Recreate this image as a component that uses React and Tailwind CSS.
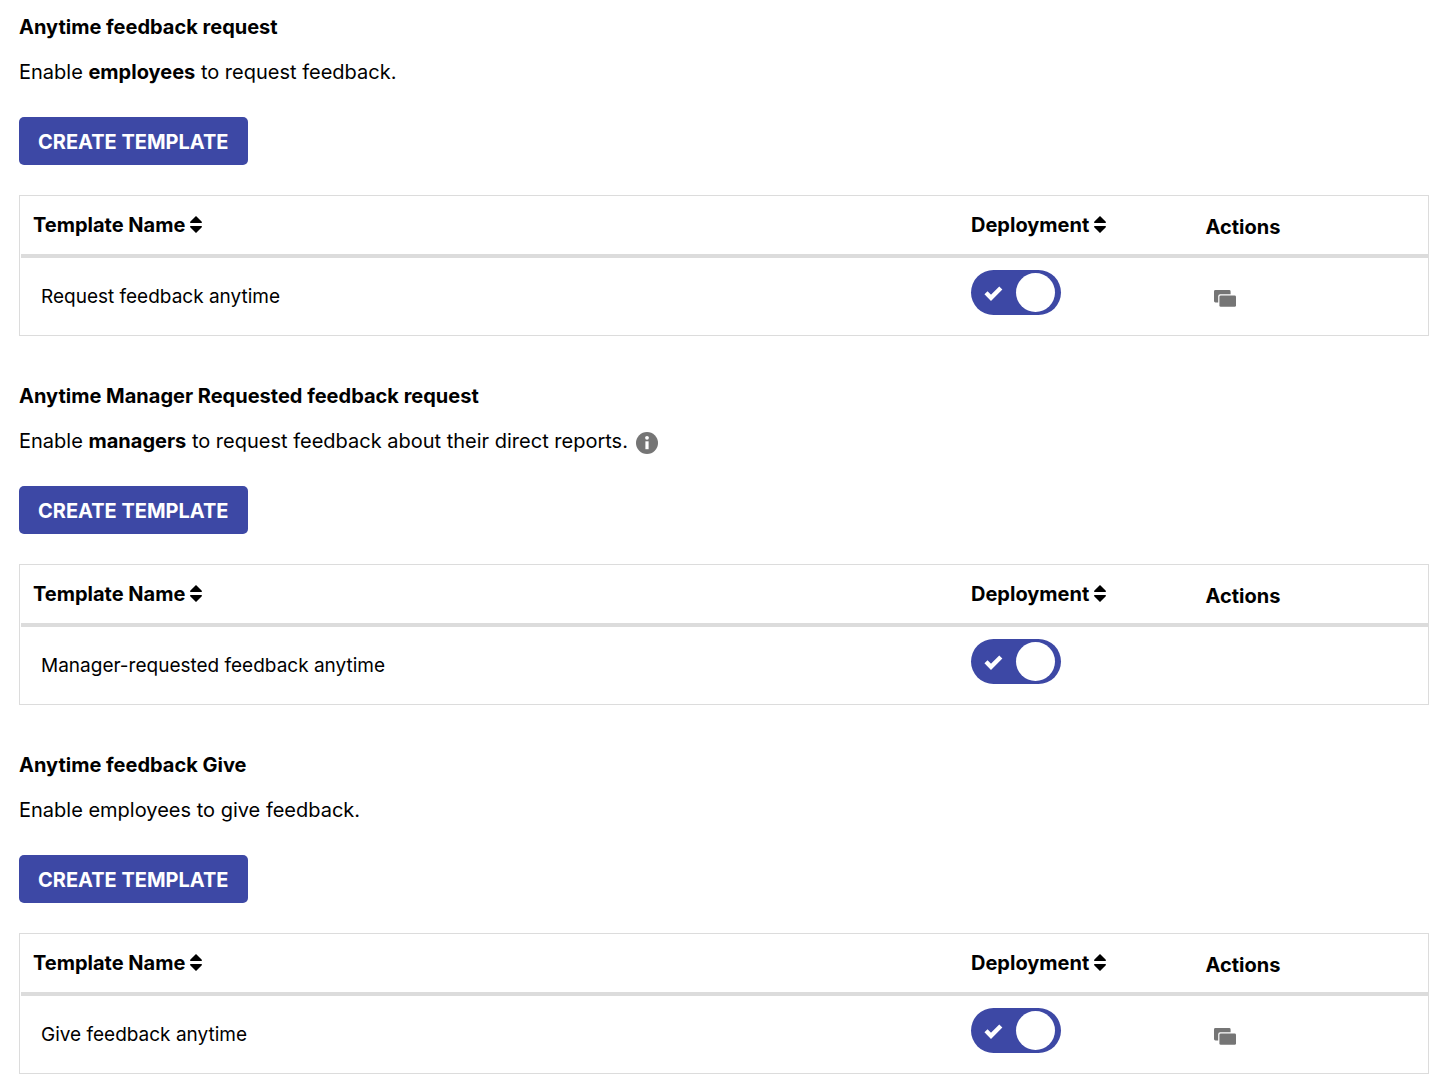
import { useState } from "react";

const sections = [
  {
    title: "Anytime feedback request",
    text: (
      <>
        Enable <b>employees</b> to request feedback.
      </>
    ),
    template: "Request feedback anytime",
    copy: true,
  },
  {
    title: "Anytime Manager Requested feedback request",
    text: (
      <>
        Enable <b>managers</b> to request feedback about their direct reports.
      </>
    ),
    info: true,
    template: "Manager-requested feedback anytime",
  },
  {
    title: "Anytime feedback Give",
    text: <>Enable employees to give feedback.</>,
    template: "Give feedback anytime",
    copy: true,
  },
];

function SortIcon() {
  return (
    <svg width="14" height="18" viewBox="0 0 14 18" aria-hidden="true">
      <path
        d="M7 0 12.8 5.8Q13.4 7.1 12.2 7.1H1.8Q.6 7.1 1.2 5.8ZM7 17 12.8 11.2Q13.4 9.9 12.2 9.9H1.8Q.6 9.9 1.2 11.2Z"
        fill="currentColor"
      />
    </svg>
  );
}

function InfoIcon() {
  return (
    <svg width="22" height="22" viewBox="0 0 22 22" aria-hidden="true">
      <circle cx="11" cy="11" r="11" fill="#757575" />
      <circle cx="11" cy="5.8" r="1.9" fill="#fff" />
      <path d="M9.4 9.3h3.2v7.9H9.4Z" fill="#fff" />
    </svg>
  );
}

function CopyIcon() {
  return (
    <svg width="22" height="17" viewBox="0 0 22 17" aria-hidden="true">
      <path
        d="M1.4 0H15.2Q16.6 0 16.6 1.4V4.2H6.2Q4.2 4.2 4.2 6.2V12.4H1.4Q0 12.4 0 11V1.4Q0 0 1.4 0Z"
        fill="#757575"
      />
      <rect x="5.4" y="5.4" width="16.6" height="11.4" rx="1.4" fill="#757575" />
    </svg>
  );
}

function Toggle({ label }) {
  const [on, setOn] = useState(true);
  return (
    <label className="relative block h-[45px] w-[90px] cursor-pointer">
      <input
        type="checkbox"
        role="switch"
        aria-label={label}
        checked={on}
        onChange={() => setOn(!on)}
        className="peer block h-full w-full cursor-pointer appearance-none rounded-full bg-gray-400 checked:bg-[#3d48a5]"
      />
      <svg
        className="absolute top-4 left-[13px] hidden peer-checked:block"
        width="19"
        height="16"
        viewBox="0 0 19 16"
        aria-hidden="true"
      >
        <path d="M2 6.8 7 11.8 16.8 2" fill="none" stroke="#fff" strokeWidth="4.4" />
      </svg>
      <span className="absolute top-[3px] left-[3px] size-[39px] rounded-full bg-white peer-checked:left-[45px]" />
    </label>
  );
}

function SortButton({ children }) {
  return (
    <button type="button" className="flex cursor-pointer items-center gap-1 font-bold">
      {children}
      <SortIcon />
    </button>
  );
}

function Section({ title, text, info, template, copy }) {
  return (
    <section>
      <h2 className="font-bold">{title}</h2>
      <div className="mt-[21px] flex items-center gap-2">
        <p>{text}</p>
        {info && (
          <button type="button" aria-label="More information" className="-my-1 cursor-pointer pt-1">
            <InfoIcon />
          </button>
        )}
      </div>
      <button
        type="button"
        className="mt-[33px] block h-12 cursor-pointer rounded-[5px] bg-[#3d48a5] px-[19px] pt-px font-bold text-white"
      >
        CREATE TEMPLATE
      </button>
      <div className="mt-[30px] border border-[#dcdcdc] pl-px">
        <table className="w-full table-fixed border-separate border-spacing-0 text-left">
          <thead>
            <tr className="h-[62px]">
              <th className="w-4/6 border-b-4 border-[#dcdcdc] px-3">
                <SortButton>Template Name</SortButton>
              </th>
              <th className="w-1/6 border-b-4 border-[#dcdcdc] px-3">
                <SortButton>Deployment</SortButton>
              </th>
              <th className="w-1/6 border-b-4 border-[#dcdcdc] px-3 pt-1">Actions</th>
            </tr>
          </thead>
          <tbody>
            <tr className="h-[77px]">
              <td className="px-5 text-[19px]">{template}</td>
              <td className="px-3 pt-3 align-top">
                <Toggle label={"Deploy " + template} />
              </td>
              <td className="px-5 pt-1">
                {copy && (
                  <button type="button" aria-label={"Copy " + template} className="block cursor-pointer">
                    <CopyIcon />
                  </button>
                )}
              </td>
            </tr>
          </tbody>
        </table>
      </div>
    </section>
  );
}

export default function App() {
  return (
    <main className="flex flex-col gap-12 bg-white px-[19px] pt-[15px] font-['Inter',sans-serif] text-[20px] leading-6 text-black">
      {sections.map((s) => (
        <Section key={s.title} {...s} />
      ))}
    </main>
  );
}
